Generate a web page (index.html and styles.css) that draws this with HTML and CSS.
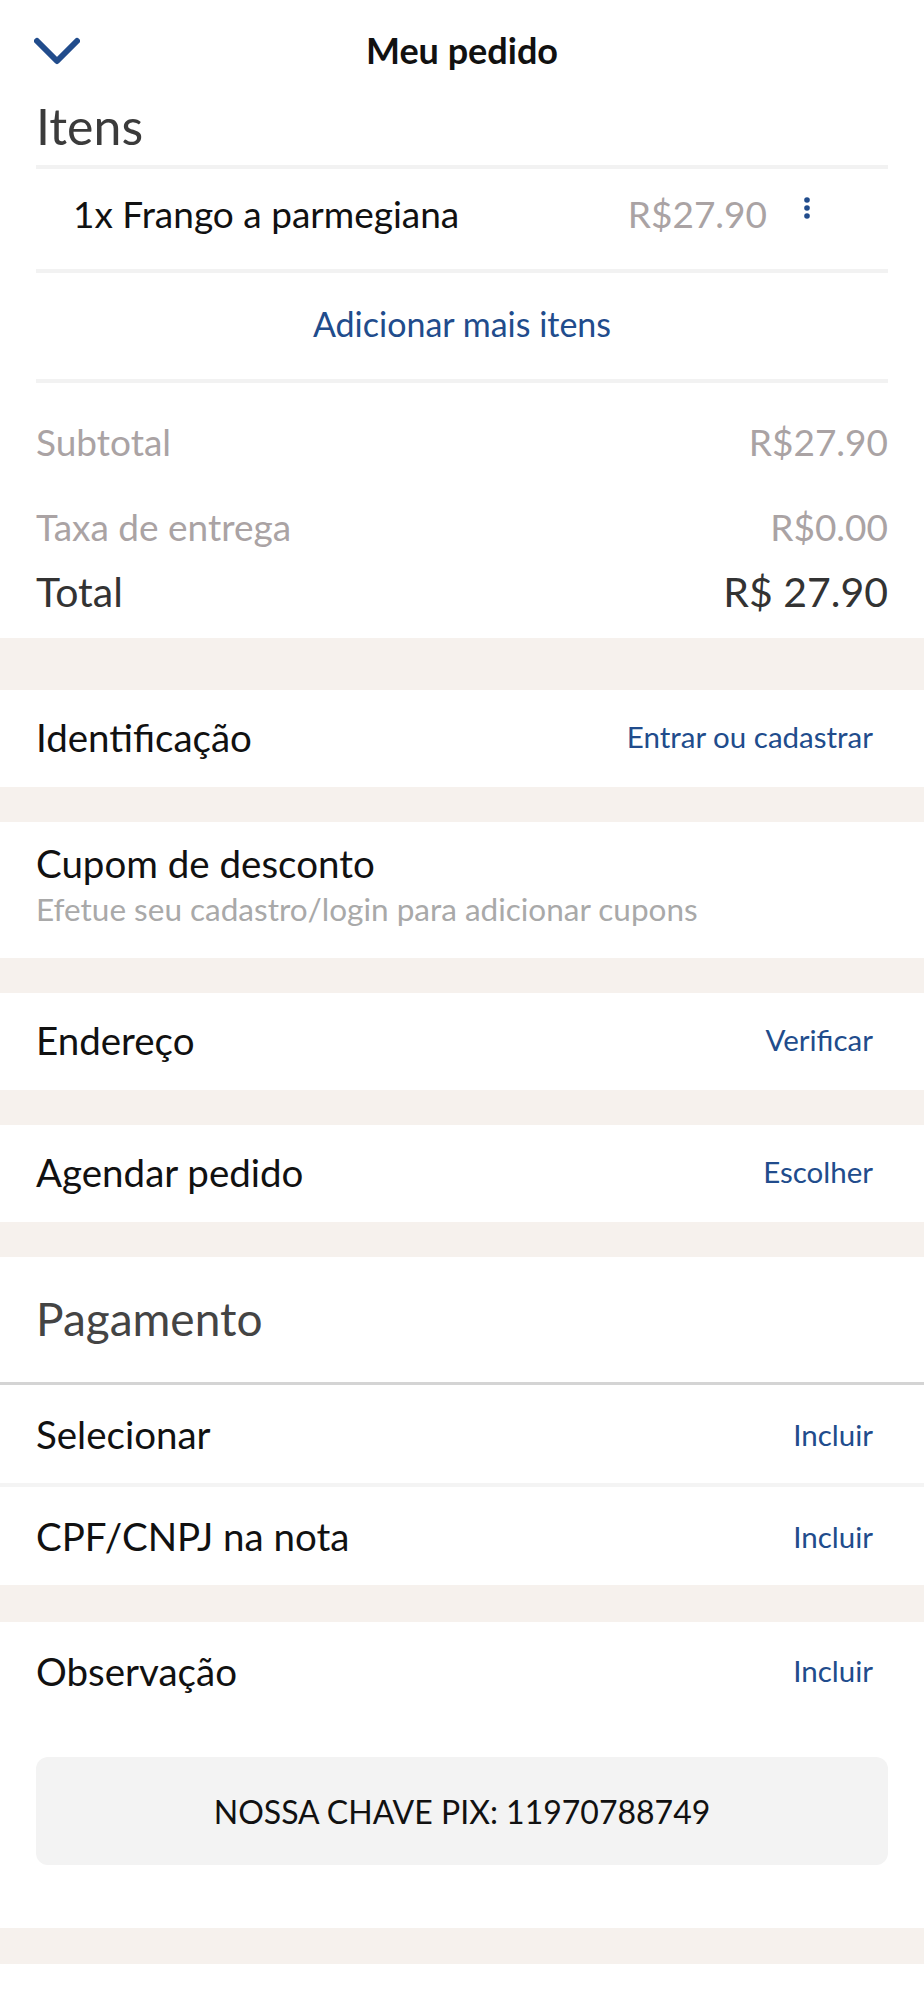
FILE: index.html
```html
<!DOCTYPE html>
<html lang="pt-BR">
<head>
  <meta charset="UTF-8">
  <title>Meu pedido</title>
  <link rel="stylesheet" href="styles.css">
</head>
<body>
  <div class="topbar">
    <span class="back">
      <svg width="46" height="28" viewBox="0 0 46 28"><path d="M3 4 L23 24 L43 4" fill="none" stroke="#214c8c" stroke-width="6" stroke-linecap="round" stroke-linejoin="round"/></svg>
    </span>
    <h1>Meu pedido</h1>
    <span></span>
  </div>

  <div class="card summary">
    <div class="items-title">Itens</div>
    <div class="items">
      <div class="item-row">
        <span class="item-name">1x Frango a parmegiana</span>
        <span class="item-price">R$27.90</span>
        <span class="more">
          <svg width="8" height="24" viewBox="0 0 8 24"><circle cx="4" cy="4" r="2.8" fill="#214c8c"/><circle cx="4" cy="12" r="2.8" fill="#214c8c"/><circle cx="4" cy="20" r="2.8" fill="#214c8c"/></svg>
        </span>
      </div>
      <div class="add-row">Adicionar mais itens</div>
    </div>
    <div class="totals">
      <div class="line sub"><span>Subtotal</span><span>R$27.90</span></div>
      <div class="line fee"><span>Taxa de entrega</span><span>R$0.00</span></div>
      <div class="line grand"><span>Total</span><span>R$ 27.90</span></div>
    </div>
  </div>

  <div class="card option first">
    <span class="label">Identificação</span>
    <a class="action">Entrar ou cadastrar</a>
  </div>

  <div class="card coupon">
    <div class="label">Cupom de desconto</div>
    <div class="hint">Efetue seu cadastro/login para adicionar cupons</div>
  </div>

  <div class="card option">
    <span class="label">Endereço</span>
    <a class="action">Verificar</a>
  </div>

  <div class="card option">
    <span class="label">Agendar pedido</span>
    <a class="action">Escolher</a>
  </div>

  <div class="card payment">
    <div class="pay-title">Pagamento</div>
    <div class="option">
      <span class="label">Selecionar</span>
      <a class="action">Incluir</a>
    </div>
    <div class="option split">
      <span class="label">CPF/CNPJ na nota</span>
      <a class="action">Incluir</a>
    </div>
  </div>

  <div class="card notes">
    <div class="option">
      <span class="label">Observação</span>
      <a class="action">Incluir</a>
    </div>
    <div class="pix">NOSSA CHAVE PIX: 11970788749</div>
  </div>

  <div class="footer"></div>
</body>
</html>
```

FILE: styles.css
```css
* {
  box-sizing: border-box;
}

body {
  margin: 0;
  font-family: Lato, "Noto Sans", sans-serif;
  background: #f6f1ed;
  color: #111;
}

.topbar {
  height: 100px;
  display: grid;
  grid-template-columns: 1fr auto 1fr;
  align-items: center;
  padding: 0 34px;
  background: #fff;
}

.back svg {
  display: block;
  margin-top: 2px;
}

.topbar h1 {
  margin: 0;
  font-size: 36px;
  font-weight: 700;
  color: #111;
}

.card {
  background: #fff;
}

.items-title {
  height: 65px;
  padding: 0 36px;
  font-size: 50px;
  line-height: 52px;
  color: #3b3b3b;
}

.items {
  margin: 0 36px;
  border-top: 4px solid #f2f2f2;
}

.item-row {
  height: 104px;
  padding: 0 41px 12px 37px;
  display: flex;
  align-items: center;
  border-bottom: 4px solid #f2f2f2;
  font-size: 37px;
}

.item-name {
  flex: 1;
}

.item-price {
  color: #aaa3a4;
  font-size: 37px;
}

.more {
  width: 80px;
  display: flex;
  justify-content: center;
  margin-top: -10px;
}

.add-row {
  height: 110px;
  padding-bottom: 6px;
  display: flex;
  align-items: center;
  justify-content: center;
  border-bottom: 4px solid #f2f2f2;
  color: #214c8c;
  font-size: 34px;
}

.totals {
  padding: 8px 36px 17px;
}

.line {
  display: flex;
  justify-content: space-between;
  align-items: center;
  color: #aaa3a4;
  font-size: 37px;
}

.line.sub {
  height: 100px;
}

.line.fee {
  height: 70px;
}

.line.grand {
  height: 60px;
  color: #333;
  font-size: 41px;
}

.option {
  height: 97px;
  padding: 0 51px 0 36px;
  display: flex;
  align-items: center;
  justify-content: space-between;
  background: #fff;
}

.card.option {
  padding-bottom: 4px;
}

.label {
  font-size: 38.5px;
  color: #111;
}

.action {
  font-size: 29.5px;
  color: #214c8c;
}

.card.option,
.card.coupon,
.card.payment {
  margin-top: 35px;
}

.card.first {
  margin-top: 52px;
}

.card.notes {
  margin-top: 37px;
}

.coupon {
  height: 136px;
  padding: 18px 36px 0;
}

.coupon .label {
  line-height: 46px;
}

.coupon .hint {
  margin-top: 4px;
  font-size: 31.5px;
  color: #a9a9a9;
}

.pay-title {
  height: 128px;
  padding: 30px 36px 0;
  font-size: 46px;
  color: #444;
  line-height: 64px;
  border-bottom: 3px solid #d4d4d4;
}

.payment .option {
  height: 98px;
}

.payment .split {
  height: 102px;
  border-top: 4px solid #f4f4f4;
}

.notes {
  padding-bottom: 63px;
}

.pix {
  margin: 38px 36px 0;
  height: 108px;
  border-radius: 12px;
  background: #f3f3f3;
  display: flex;
  align-items: center;
  justify-content: center;
  font-size: 32px;
  color: #111;
}

.footer {
  height: 36px;
  background: #f6f1ed;
}

body::after {
  content: "";
  display: block;
  height: 40px;
  background: #fff;
}
```
